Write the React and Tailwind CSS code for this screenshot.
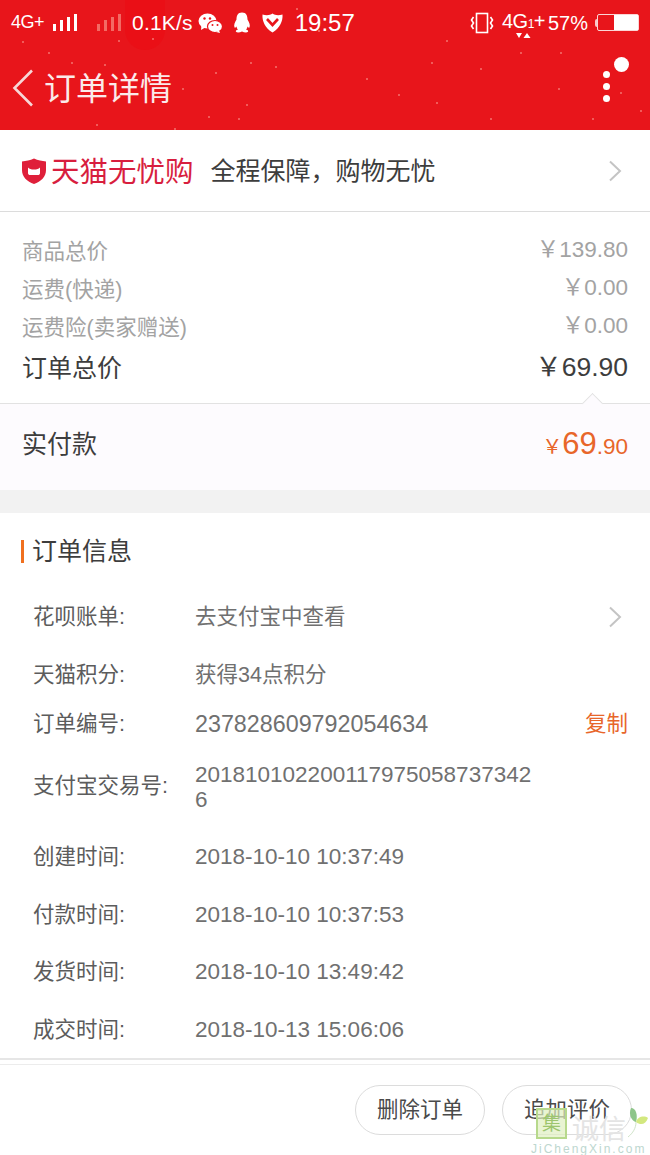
import React from "react";

const FONT = "font-['Liberation_Sans','Noto_Sans_CJK_SC',sans-serif]";

// light speckles scattered over the festive header
const specks = [
  [22, 41], [48, 52], [71, 62], [104, 64], [118, 40], [152, 38], [182, 88], [215, 72], [246, 104], [275, 66],
  [296, 8], [96, 124], [174, 128], [208, 116], [238, 118], [250, 62], [318, 30], [366, 78], [398, 94], [431, 62],
  [446, 40], [480, 68], [520, 52], [558, 88], [560, 52], [592, 118], [620, 92], [640, 110], [436, 102], [490, 118],
];

function Chevron() {
  return (
    <svg width="16" height="24" viewBox="0 0 16 24" fill="none" className="shrink-0">
      <path d="M3 2.5 L13 12 L3 21.5" stroke="#c4c4c4" strokeWidth="2" />
    </svg>
  );
}

function Bars({ className }) {
  return (
    <svg width="26" height="18" viewBox="0 0 26 18" className={className}>
      <rect x="0" y="10" width="3" height="7" fill="currentColor" />
      <rect x="7" y="6" width="3" height="11" fill="currentColor" />
      <rect x="14" y="3" width="3" height="14" fill="currentColor" />
      <rect x="21" y="0" width="3" height="17" fill="currentColor" />
    </svg>
  );
}

function WeChat() {
  return (
    <svg width="25" height="20" viewBox="0 0 25 20" fill="#fff">
      <ellipse cx="9.5" cy="8" rx="9" ry="7.5" />
      <path d="M3.5 12 L3 17 L8 14 Z" />
      <ellipse cx="17" cy="13.5" rx="7.5" ry="6" stroke="#e8151b" strokeWidth="1.2" />
      <path d="M21 17.5 L22 20 L18 19 Z" />
      <circle cx="6.5" cy="5.5" r="1.2" fill="#e8151b" />
      <circle cx="12" cy="5.5" r="1.2" fill="#e8151b" />
      <circle cx="14.5" cy="12" r="1" fill="#e8151b" />
      <circle cx="19.5" cy="12" r="1" fill="#e8151b" />
    </svg>
  );
}

function Penguin() {
  return (
    <svg width="18" height="21" viewBox="0 0 18 21" fill="#fff">
      <path d="M9 0.5 C13.5 0.5 14.5 4 14.5 7.5 C16 10 17.5 13 16.5 15.5 C15.5 16 15 15 14.5 14.5 C14.3 16 13.6 17 13 17.5 C15 18 15.5 19 15 19.8 C14 20.8 11 20.5 9 19.5 C7 20.5 4 20.8 3 19.8 C2.5 19 3 18 5 17.5 C4.4 17 3.7 16 3.5 14.5 C3 15 2.5 16 1.5 15.5 C0.5 13 2 10 3.5 7.5 C3.5 4 4.5 0.5 9 0.5 Z" />
    </svg>
  );
}

function Shield() {
  return (
    <svg width="21" height="20" viewBox="0 0 21 20">
      <path d="M10.5 0.5 C13 2.5 17 2.5 20.5 1.5 C21 8 18 15 10.5 19.5 C3 15 0 8 0.5 1.5 C4 2.5 8 2.5 10.5 0.5 Z" fill="#fff" />
      <path d="M5 6 L10.5 12 L16 6" fill="none" stroke="#e8151b" strokeWidth="2.6" />
    </svg>
  );
}

function Vibrate() {
  return (
    <svg width="24" height="22" viewBox="0 0 24 22" fill="none" stroke="#fff" strokeWidth="1.6">
      <rect x="6.5" y="1.5" width="11" height="19" />
      <path d="M3.5 5 L1.5 8 L3.5 11 L1.5 14 L3.5 17" />
      <path d="M20.5 5 L22.5 8 L20.5 11 L22.5 14 L20.5 17" />
    </svg>
  );
}

function Battery() {
  return (
    <div className="flex items-center">
      <div className="w-[2px] h-[8px] bg-[#f9c9c9] rounded-l-sm" />
      <div className="w-[42px] h-[17px] border border-[#fbd5d5] rounded-[2px] flex justify-end">
        <div className="w-[24px] h-full bg-white" />
      </div>
    </div>
  );
}

function Network() {
  return (
    <div className="relative w-[39px] h-[30px]">
      <span className="absolute left-0 top-[3px] text-[20px] leading-none tracking-[-0.5px] whitespace-nowrap">
        4G<span className="text-[12px]">1</span>+
      </span>
      <svg width="16" height="7" viewBox="0 0 16 7" className="absolute left-[13px] top-[24px]" fill="#fff">
        <path d="M1 1 H7 L4 6 Z" />
        <path d="M12 1 L15.5 6 H8.5 Z" />
      </svg>
    </div>
  );
}

function TmallShield() {
  return (
    <svg width="26" height="26" viewBox="0 0 26 26" className="shrink-0">
      <path d="M13 0.5 C17 2.5 21 3 25 3.5 V12 C25 19 20 23.5 13 26 C6 23.5 1 19 1 12 V3.5 C5 3 9 2.5 13 0.5 Z" fill="#df1f3a" />
      <path d="M7 9.5 C8.5 11 10 11.5 13 11.5 C16 11.5 17.5 11 19 9.5 V15 C19 16.5 18 17 17 17 H9 C8 17 7 16.5 7 15 Z" fill="#fff" />
    </svg>
  );
}

function PriceRow({ label, value, muted = true }) {
  const tone = muted ? "text-[#a3a3a3] text-[21.5px]" : "text-[#3d3d3d] text-[25px]";
  return (
    <div className={`flex items-center justify-between h-[38px] ${tone}`}>
      <span>{label}</span>
      <span className={muted ? "text-[22.5px] -mt-[4px]" : "text-[26.5px] -mt-[2px]"}>
        ￥{value}
      </span>
    </div>
  );
}

function InfoRow({ label, h, children, end }) {
  return (
    <div className={`flex items-center pl-[33px] pr-[22px] ${h}`}>
      <span className="w-[162px] shrink-0 text-[21.5px] text-[#5c5c5c]">{label}</span>
      <div className="flex-1 min-w-0 text-[#707070] text-[21.5px]">{children}</div>
      {end}
    </div>
  );
}

function Pill({ children }) {
  return (
    <div className="w-[130px] h-[50px] rounded-full border border-[#dcdcdc] flex items-center justify-center text-[21.5px] text-[#4a4a4a]">
      {children}
    </div>
  );
}

export default function App() {
  return (
    <div className={`relative w-[650px] h-[1155px] overflow-hidden bg-white ${FONT}`}>
      {/* Red header with status bar */}
      <header className="relative h-[130px] bg-[#e8151b] text-white overflow-hidden">
        <div className="absolute left-[125px] top-0 w-[40px] h-[50px] rounded-b-full bg-[#ea0f16]" />
        {specks.map(([x, y], i) => (
          <span key={i} className="absolute w-[2px] h-[2px] rounded-full bg-[#f5736f]" style={{ left: x, top: y }} />
        ))}
        <div className="relative flex items-center h-[45px] pl-[11px] pr-[11px]">
          <span className="text-[18px] w-[36px] tracking-[-0.5px] whitespace-nowrap">4G+</span>
          <Bars className="ml-[6px] text-white" />
          <Bars className="ml-[18px] text-[#f36a64]" />
          <span className="ml-[9px] text-[21px] tracking-[0.2px]">0.1K/s</span>
          <span className="ml-[5px]"><WeChat /></span>
          <span className="ml-[10px]"><Penguin /></span>
          <span className="ml-[11px]"><Shield /></span>
          <span className="ml-[12px] text-[24px]">19:57</span>
          <span className="ml-auto"><Vibrate /></span>
          <span className="ml-[8px]"><Network /></span>
          <span className="ml-[7px] text-[20px]">57%</span>
          <span className="ml-[7px]"><Battery /></span>
        </div>
        <div className="relative flex items-center h-[85px] pl-[12px] pr-[40px]">
          <svg width="22" height="38" viewBox="0 0 22 38" fill="none" className="shrink-0">
            <path d="M20 1.5 L2.5 19 L20 36.5" stroke="#f7d7d7" strokeWidth="2.6" />
          </svg>
          <h1 className="ml-[10px] text-[32px] font-normal text-[#fbeaea] pt-[2px]">订单详情</h1>
          <div className="ml-auto flex flex-col gap-[5px] -mt-[2px]">
            <span className="w-[7px] h-[7px] rounded-full bg-white" />
            <span className="w-[7px] h-[7px] rounded-full bg-white" />
            <span className="w-[7px] h-[7px] rounded-full bg-white" />
          </div>
          <span className="absolute left-[614px] top-[12px] w-[15px] h-[15px] rounded-full bg-white" />
        </div>
      </header>

      {/* Tmall guarantee banner */}
      <section className="flex items-center h-[82px] pl-[21px] pr-[27px] border-b border-[#dcdcdc]">
        <TmallShield />
        <span className="ml-[4px] text-[28.5px] text-[#d81e3e] leading-none pt-[3px]">天猫无忧购</span>
        <span className="ml-[17px] text-[25px] text-[#3d3d3d] pt-[3px]">全程保障，购物无忧</span>
        <span className="ml-auto"><Chevron /></span>
      </section>

      {/* Price breakdown */}
      <section className="pt-[21px] px-[22px] h-[192px] border-b border-[#e2e2e2] relative">
        <PriceRow label="商品总价" value="139.80" />
        <PriceRow label="运费(快递)" value="0.00" />
        <PriceRow label="运费险(卖家赠送)" value="0.00" />
        <div className="mt-[3px]">
          <PriceRow label="订单总价" value="69.90" muted={false} />
        </div>
        <span className="absolute right-[50px] -bottom-[8px] w-[15px] h-[15px] rotate-45 bg-[#fdfbfe] border-l border-t border-[#e2e2e2]" />
      </section>

      <section className="flex items-center justify-between h-[86px] px-[22px] pb-[4px] bg-[#fdfbfe]">
        <span className="text-[25px] text-[#3d3d3d]">实付款</span>
        <span className="text-[#e8662a] flex items-baseline -mt-[2px]">
          <span className="text-[20px]">￥</span>
          <span className="text-[31px]">69</span>
          <span className="text-[22.5px]">.90</span>
        </span>
      </section>

      <div className="h-[23px] bg-[#f2f2f2]" />

      {/* Order information */}
      <section className="relative">
        <div className="flex items-center h-[79px] pl-[21px] pb-[1px]">
          <span className="w-[3px] h-[23px] bg-[#f0701f] -mt-[2px]" />
          <h2 className="ml-[8px] text-[25px] font-normal text-[#3d3d3d]">订单信息</h2>
        </div>
        <InfoRow label="花呗账单:" h="h-[50px]" end={<span className="mr-[5px]"><Chevron /></span>}>
          去支付宝中查看
        </InfoRow>
        <div className="h-[8px]" />
        <InfoRow label="天猫积分:" h="h-[50px]">获得34点积分</InfoRow>
        <InfoRow label="订单编号:" h="h-[48px]" end={<span className="text-[21.5px] text-[#e8662a]">复制</span>}>
          <span className="text-[23.3px]">237828609792054634</span>
        </InfoRow>
        <InfoRow label="支付宝交易号:" h="h-[77px]">
          <div className="w-[340px] text-[22.5px] leading-[25px] break-all">2018101022001179750587373426</div>
        </InfoRow>
        <InfoRow label="创建时间:" h="h-[64px]"><span className="text-[22.5px]">2018-10-10 10:37:49</span></InfoRow>
        <div className="h-[1px]" />
        <InfoRow label="付款时间:" h="h-[50px]"><span className="text-[22.5px]">2018-10-10 10:37:53</span></InfoRow>
        <div className="h-[7px]" />
        <InfoRow label="发货时间:" h="h-[50px]"><span className="text-[22.5px]">2018-10-10 13:49:42</span></InfoRow>
        <div className="h-[8px]" />
        <InfoRow label="成交时间:" h="h-[50px]"><span className="text-[22.5px]">2018-10-13 15:06:06</span></InfoRow>
      </section>

      {/* Action bar */}
      <footer className="absolute left-0 right-0 top-[1058px]">
        <div className="h-[2px] bg-[#e6e6e6]" />
        <div className="h-[4px]" />
        <div className="h-[1px] bg-[#ececec]" />
        <div className="flex justify-end gap-[17px] pr-[18px] pt-[20px]">
          <Pill>删除订单</Pill>
          <Pill>追加评价</Pill>
        </div>
      </footer>

      {/* Site stamp in the lower corner */}
      <div className="absolute left-[531px] top-[1106px] w-[119px] h-[49px] pointer-events-none">
        <div className="absolute left-[5px] top-[2px] w-[31px] h-[31px] bg-[#dff0c0]/70 border-2 border-[#b7d98c] flex items-center justify-center text-[19px] leading-none text-[#9cc56e]">
          集
        </div>
        <span className="absolute left-[41px] top-[11px] text-[27px] leading-none text-[#e4e4e4]">诚信</span>
        <svg width="22" height="32" viewBox="0 0 22 32" className="absolute left-[96px] top-[1px]">
          <path d="M4 1 C9 1 11 8 9 15 C5 14 1 8 4 1 Z" fill="#8ec58a" />
          <path d="M9 15 C10 10 17 8 21 11 C19 17 14 19 9 15 Z" fill="#d3e87f" />
          <path d="M9 15 C9 21 6 26 1 30" fill="none" stroke="#cfe3c8" strokeWidth="1" />
        </svg>
        <span className="absolute left-0 top-[37px] text-[12px] leading-none tracking-[2px] text-[#bdd7cf] whitespace-nowrap">JiChengXin.com</span>
      </div>
    </div>
  );
}
